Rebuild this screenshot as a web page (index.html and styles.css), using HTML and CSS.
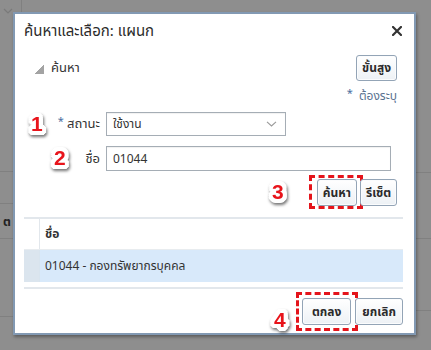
FILE: index.html
```html
<!DOCTYPE html>
<html lang="th">
<head>
<meta charset="utf-8">
<link rel="stylesheet" href="styles.css">
</head>
<body>
<div class="backdrop">
  <svg class="bg-chevron" width="10" height="6" viewBox="0 0 10 6"><path d="M1 1 L5 5 L9 1" fill="none" stroke="#7a7a7a" stroke-width="1.2"/></svg>
  <span class="bg-letter">ต</span>
</div>
<div class="dialog">
  <div class="dlg-head">
    <h1 class="dlg-title">ค้นหาและเลือก: แผนก</h1>
    <svg class="close" width="10" height="10" viewBox="0 0 10 10"><path d="M1 1 L9 9 M9 1 L1 9" stroke="#333" stroke-width="2.2" stroke-linecap="square"/></svg>
  </div>
  <div class="search-bar">
    <div class="toggle"><span class="tri"></span><span>ค้นหา</span></div>
    <button class="btn">ขั้นสูง</button>
  </div>
  <div class="required"><span class="star">*</span><span>ต้องระบุ</span></div>
  <div class="form">
    <div class="field">
      <span class="badge b1">1</span>
      <label class="lbl"><span class="star">*</span> สถานะ</label>
      <div class="select">
        <span>ใช้งาน</span>
        <svg width="11" height="6" viewBox="0 0 11 6"><path d="M1 0.8 L5.5 5 L10 0.8" fill="none" stroke="#9a9a9a" stroke-width="1.1"/></svg>
      </div>
    </div>
    <div class="field">
      <span class="badge b2">2</span>
      <label class="lbl">ชื่อ</label>
      <div class="input">01044</div>
    </div>
  </div>
  <div class="actions">
    <span class="badge b3">3</span>
    <button class="btn hl hl-search">ค้นหา</button>
    <button class="btn">รีเซ็ต</button>
  </div>
  <div class="table">
    <div class="trow thead">
      <div class="tcell sel"></div>
      <div class="tcell">ชื่อ</div>
    </div>
    <div class="trow tdata">
      <div class="tcell sel"></div>
      <div class="tcell">01044 - กองทรัพยากรบุคคล</div>
    </div>
  </div>
  <div class="footer">
    <span class="badge b4">4</span>
    <button class="btn hl hl-ok">ตกลง</button>
    <button class="btn">ยกเลิก</button>
  </div>
</div>
</body>
</html>
```

FILE: styles.css
```css
* { box-sizing: border-box; }
html, body { margin: 0; padding: 0; }
body {
  width: 431px;
  height: 350px;
  overflow: hidden;
  position: relative;
  font-family: Tahoma, "Noto Sans Thai", "Noto Sans", "Liberation Sans", sans-serif;
  color: #333;
  background-color: #8e8e8e;
  background-image:
    linear-gradient(#808080, #808080),
    linear-gradient(#808080, #808080),
    linear-gradient(#808080, #808080),
    linear-gradient(#808080, #808080),
    linear-gradient(#808080, #808080),
    linear-gradient(#808080, #808080),
    linear-gradient(#808080, #808080),
    linear-gradient(#808080, #808080);
  background-size: 1px 12px, 13px 1px, 13px 1px, 13px 1px, 13px 1px, 15px 1px, 15px 1px, 15px 1px;
  background-position: 21px 0, 0 171px, 0 203px, 0 238px, 0 316px, 416px 172px, 416px 238px, 416px 310px;
  background-repeat: no-repeat;
  padding: 12px 0 0 13px;
}
.backdrop { position: absolute; left: 0; top: 0; width: 0; height: 0; }
.bg-chevron { position: absolute; left: 3px; top: 8px; }
.bg-letter { position: absolute; left: 3px; top: 213px; font-size: 12px; font-weight: bold; color: #222; }

.dialog {
  position: relative;
  width: 403px;
  height: 323px;
  background: #fff;
  border: 2px solid #8299b3;
  box-shadow: 1px 2px 3px rgba(0,0,0,0.35);
  padding: 0 11px 0 9px;
  display: flex;
  flex-direction: column;
}
.dlg-head {
  height: 33px;
  display: flex;
  align-items: center;
  justify-content: space-between;
  padding-right: 6px;
}
.dlg-title {
  margin: 0;
  font-size: 15px;
  font-weight: normal;
  color: #2b2b2b;
  padding-top: 2px;
}
.close { display: block; margin-right: -5px; }

.search-bar {
  margin-top: 8px;
  height: 26px;
  display: flex;
  align-items: center;
  justify-content: space-between;
  padding-left: 10px;
  padding-right: 6px;
}
.toggle { display: flex; align-items: center; gap: 7px; font-size: 13px; color: #333; }
.tri {
  width: 10px; height: 10px;
  background: linear-gradient(to bottom right, transparent 50%, #a3a3a3 50%);
  margin-top: 1px;
}

.btn {
  font-family: inherit;
  font-size: 12px;
  font-weight: bold;
  color: #2b2b2b;
  height: 26px;
  padding: 0 5px;
  border: 1px solid #93a4b6;
  border-radius: 3px;
  background: linear-gradient(#ffffff, #edf1f5);
  box-shadow: inset 0 0 0 1px #fbfcfd;
  position: relative;
}

.required {
  height: 16px;
  margin-top: 7px;
  display: flex;
  justify-content: flex-end;
  align-items: center;
  padding-right: 6px;
  font-size: 12px;
  color: #5b7391;
  gap: 6px;
}
.star { color: #4a6da0; font-size: 11px; }
.required .star { position: relative; top: -3px; }

.form { margin-top: 8px; display: flex; flex-direction: column; gap: 10px; }
.field {
  position: relative;
  display: grid;
  grid-template-columns: 76px auto;
  column-gap: 6px;
  align-items: center;
}
.lbl { text-align: right; font-size: 13px; color: #333; }
.lbl .star { position: relative; top: -3px; }
.select {
  width: 180px;
  height: 24px;
  border: 1px solid #a5adb5;
  box-shadow: inset 0 1px 1px rgba(0,0,0,0.06);
  display: flex;
  align-items: center;
  justify-content: space-between;
  padding: 0 8px 0 6px;
  font-size: 12px;
  color: #333;
}
.input {
  width: 285px;
  height: 25px;
  border: 1px solid #a5adb5;
  box-shadow: inset 0 1px 1px rgba(0,0,0,0.06);
  display: flex;
  align-items: center;
  padding: 0 6px;
  font-size: 12px;
  color: #333;
}

.actions {
  position: relative;
  margin-top: 8px;
  height: 27px;
  display: flex;
  justify-content: flex-end;
  gap: 3px;
  padding-right: 6px;
}
.actions .btn { height: 27px; }

.hl::after {
  content: "";
  position: absolute;
  border: 3px dashed #e4141b;
  pointer-events: none;
}
.hl-search::after { left: -9px; right: -7px; top: -5px; bottom: -4px; }
.hl-ok::after { left: -7px; right: -8px; top: -7px; bottom: -7px; }

.badge {
  position: absolute;
  font-family: "Liberation Sans", Arial, sans-serif;
  font-weight: bold;
  font-size: 21px;
  line-height: 1;
  color: #e8141b;
  text-shadow:
    2px 0 0 #fff, -2px 0 0 #fff, 0 2px 0 #fff, 0 -2px 0 #fff,
    2px 2px 0 #fff, -2px -2px 0 #fff, 2px -2px 0 #fff, -2px 2px 0 #fff,
    4px 0 0 #fff, -4px 0 0 #fff, 0 4px 0 #fff, 0 -4px 0 #fff,
    3px 3px 0 #fff, -3px 3px 0 #fff, 3px -3px 0 #fff, -3px -3px 0 #fff,
    4px 2px 0 #fff, -4px 2px 0 #fff, 4px -2px 0 #fff, -4px -2px 0 #fff,
    2px 4px 0 #fff, -2px 4px 0 #fff, 2px -4px 0 #fff, -2px -4px 0 #fff;
  filter: drop-shadow(1px 2px 1.5px rgba(0,0,0,0.55));
}
.b1 { left: 7px; top: 1px; }
.b2 { left: 30px; top: 1px; }
.b3 { left: 248px; top: 2px; }
.b4 { left: 250px; top: 11px; }

.table { margin-top: 11px; border-top: 2px solid #e2e7ec; border-bottom: 2px solid #e2e7ec; }
.trow { display: flex; }
.tcell { display: flex; align-items: center; padding-left: 5px; font-size: 12px; color: #333; flex: 1; }
.tcell.sel { flex: 0 0 16px; padding: 0; border-right: 1px solid #e2e7ec; }
.thead { height: 31px; border-bottom: 1px solid #e8ecef; }
.thead .tcell { font-weight: bold; }
.tdata { height: 32px; background: #d8e9fa; margin-bottom: 5px; }
.tdata .tcell.sel { background: #dbe5ee; border-right: 1px solid #d8e4ee; }

.footer {
  position: relative;
  margin-top: 9px;
  height: 27px;
  display: flex;
  justify-content: flex-end;
  gap: 4px;
}
.footer .btn { height: 27px; padding: 0 6px; }
.hl-ok { padding: 0 9px !important; }
```
